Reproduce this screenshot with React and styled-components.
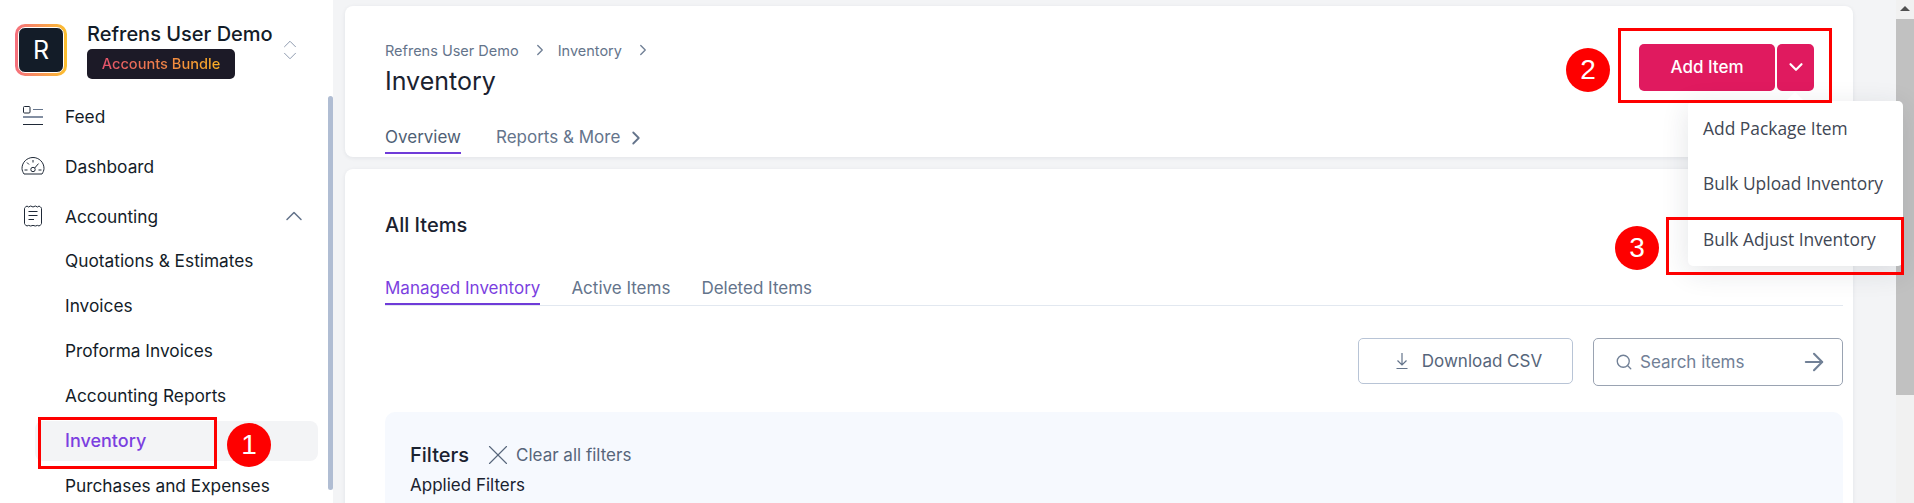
import styled, { createGlobalStyle } from 'styled-components';
import { ChevronUp, ChevronDown, ChevronRight, Search, ArrowRight, X } from 'lucide-react';

const font = `'Inter', 'Noto Sans', sans-serif`;

const GlobalStyle = createGlobalStyle`
  html, body {
    margin: 0;
    padding: 0;
    height: 503px;
    overflow: hidden;
    background: #f3f4f6;
    font-family: ${font};
  }
  * { box-sizing: border-box; }
`;

const Page = styled.div`
  position: relative;
  display: flex;
  width: 1914px;
  height: 503px;
  overflow: hidden;
  background: #f3f4f6;
`;

const Sidebar = styled.aside`
  position: relative;
  flex: 0 0 333px;
  height: 503px;
  background: #fff;
  overflow: hidden;
`;

const SideThumb = styled.div`
  position: absolute;
  right: 0;
  top: 96px;
  width: 5px;
  height: 394px;
  border-radius: 3px;
  background: #b0bdd3;
`;

const Brand = styled.div`
  display: flex;
  align-items: center;
  height: 91px;
  padding: 9px 0 0 15px;
`;

const LogoRing = styled.div`
  flex: 0 0 52px;
  height: 52px;
  padding: 3px;
  border-radius: 10px;
  background: linear-gradient(90deg, #f56f7e, #fcc02e);
`;

const Logo = styled.div`
  display: flex;
  align-items: center;
  justify-content: center;
  height: 100%;
  border: 1px solid #fff;
  border-radius: 7px;
  background: #131c28;
  color: #fff;
  font-size: 25px;
`;

const BrandText = styled.div`
  display: flex;
  flex-direction: column;
  align-items: flex-start;
  gap: 2px;
  width: 197px;
  margin-left: 20px;
`;

const BrandName = styled.div`
  font-size: 20px;
  line-height: 25px;
  font-weight: 500;
  color: #131c28;
  white-space: nowrap;
`;

const Badge = styled.div`
  display: flex;
  align-items: center;
  justify-content: center;
  width: 148px;
  height: 30px;
  border-radius: 5px;
  background: #1c1a27;
  font-size: 14.6px;
  font-weight: 500;
  span {
    background: linear-gradient(90deg, #e6526c, #fbb124);
    -webkit-background-clip: text;
    background-clip: text;
    color: transparent;
  }
`;

const Switcher = styled.div`
  display: flex;
  flex-direction: column;
  color: #8593a8;
  margin-left: -5px;
  svg { margin: -5px 0; }
`;

const NavRow = styled.div`
  display: flex;
  align-items: center;
  height: 50px;
  padding-left: 21px;
  color: #131c28;
  font-size: 17.3px;
`;

const NavIcon = styled.svg`
  flex: 0 0 24px;
  margin-right: 20px;
`;

const Caret = styled.div`
  display: flex;
  margin-left: auto;
  margin-right: 25px;
  color: #64748b;
`;

const SubList = styled.div`
  display: flex;
  flex-direction: column;
  margin-top: -3px;
`;

const SubRow = styled.div`
  display: flex;
  align-items: center;
  height: 40px;
  margin: 2.5px 15px 2.5px 35px;
  padding-left: 30px;
  border-radius: 8px;
  white-space: nowrap;
  font-size: ${(p) => (p.$active ? 18 : 17.3)}px;
  color: ${(p) => (p.$active ? '#7b3fe0' : '#131c28')};
  font-weight: ${(p) => (p.$active ? 500 : 400)};
  background: ${(p) => (p.$active ? '#f3f4f6' : 'transparent')};
`;

const Main = styled.main`
  flex: 1;
  display: flex;
  flex-direction: column;
  gap: 12px;
  padding: 6px 61px 0 12px;
  min-width: 0;
`;

const TopCard = styled.section`
  position: relative;
  flex: 0 0 151px;
  background: #fff;
  border-radius: 8px;
  box-shadow: 0 1px 4px rgba(30, 41, 59, 0.08);
  padding: 33px 0 0 40px;
`;

const Crumbs = styled.div`
  display: flex;
  align-items: center;
  height: 22px;
  font-size: 14.5px;
  color: #64748b;
  svg { margin: 0 9px 0 12px; color: #718096; }
`;

const Title = styled.h1`
  margin: 3px 0 0;
  font-size: 25px;
  line-height: 34px;
  font-weight: 400;
  color: #1a2230;
`;

const TopTabs = styled.div`
  display: flex;
  gap: 35px;
  margin-top: 24px;
`;

const Tab = styled.div`
  display: flex;
  align-items: center;
  height: 32px;
  padding-bottom: 1px;
  font-size: 17px;
  white-space: nowrap;
  color: ${(p) => (p.$purple ? '#7b3fe0' : p.$line ? '#4f5f75' : '#64748b')};
  border-bottom: 2px solid ${(p) => (p.$line ? '#6f3bd8' : 'transparent')};
  svg { margin-left: 5px; margin-top: 2px; }
`;

const ButtonGroup = styled.div`
  position: absolute;
  top: 38px;
  right: 39px;
  display: flex;
  gap: 2px;
`;

const PinkButton = styled.button`
  display: flex;
  align-items: center;
  justify-content: center;
  width: ${(p) => p.$w}px;
  height: 47px;
  padding: 0 0 1px;
  border: 0;
  border-radius: 5px;
  background: #e01a5f;
  color: #fff;
  font-family: ${font};
  font-size: 17px;
  font-weight: 500;
`;

const BodyCard = styled.section`
  flex: 1;
  background: #fff;
  border-radius: 8px 8px 0 0;
  box-shadow: 0 1px 4px rgba(30, 41, 59, 0.08);
  padding: 43px 10px 0 40px;
`;

const SectionTitle = styled.h2`
  margin: 0;
  font-size: 20px;
  line-height: 26px;
  font-weight: 500;
  color: #1a2230;
`;

const TabBar = styled.div`
  display: flex;
  gap: 31px;
  margin-top: 35px;
  border-bottom: 1px solid #e2e8f0;
`;

const Tools = styled.div`
  display: flex;
  justify-content: flex-end;
  align-items: flex-start;
  gap: 20px;
  margin-top: 32px;
`;

const DownloadButton = styled.button`
  display: flex;
  align-items: center;
  justify-content: center;
  gap: 12px;
  width: 215px;
  height: 46px;
  padding: 0 0 0 5px;
  background: #fff;
  border: 1px solid #b8c4d6;
  border-radius: 5px;
  color: #56657a;
  font-family: ${font};
  font-size: 17px;
`;

const SearchBox = styled.div`
  display: flex;
  align-items: center;
  width: 250px;
  height: 48px;
  padding: 0 14px 0 21px;
  border: 1px solid #9aa3b2;
  border-radius: 5px;
  color: #718096;
  font-size: 17px;
  span { margin-left: 7px; flex: 1; }
`;

const FilterPanel = styled.div`
  margin-top: 26px;
  height: 100px;
  padding: 30px 25px 0;
  border-radius: 10px 10px 0 0;
  background: #f6f9fe;
`;

const FilterHead = styled.div`
  display: flex;
  align-items: center;
  height: 26px;
`;

const FilterTitle = styled.div`
  font-size: 20px;
  font-weight: 500;
  color: #1a2230;
`;

const ClearLink = styled.div`
  display: flex;
  align-items: center;
  gap: 7px;
  margin-left: 18px;
  font-size: 17px;
  color: #56657a;
  svg { margin: -6px; }
`;

const AppliedLabel = styled.div`
  margin-top: 6px;
  font-size: 17px;
  line-height: 22px;
  color: #1a2230;
`;

const Scrollbar = styled.div`
  position: absolute;
  top: 0;
  right: 0;
  bottom: 0;
  width: 18px;
  background: #f1f1f1;
`;

const ScrollArrow = styled.div`
  position: absolute;
  top: 6px;
  left: 4px;
  width: 0;
  height: 0;
  border-left: 5px solid transparent;
  border-right: 5px solid transparent;
  border-bottom: 5px solid #505050;
`;

const ScrollThumb = styled.div`
  position: absolute;
  top: 19px;
  left: 0;
  right: 0;
  height: 376px;
  background: #c1c1c1;
`;

const Menu = styled.div`
  position: absolute;
  top: 101px;
  left: 1688px;
  width: 215px;
  height: 165px;
  border-radius: 5px;
  background: #fff;
  box-shadow: 0 6px 28px rgba(30, 41, 59, 0.12);
  font-family: 'Open Sans', 'Noto Sans', sans-serif;
  &::before {
    content: '';
    position: absolute;
    top: -9px;
    left: 98px;
    border-left: 9px solid transparent;
    border-right: 9px solid transparent;
    border-bottom: 9px solid #fff;
  }
`;

const MenuItem = styled.div`
  display: flex;
  align-items: center;
  height: 55.5px;
  padding-left: 15px;
  font-size: 17.4px;
  color: #3f4754;
  white-space: nowrap;
  &:first-child { margin-top: -1px; }
`;

const RedBox = styled.div`
  position: absolute;
  left: ${(p) => p.$x}px;
  top: ${(p) => p.$y}px;
  width: ${(p) => p.$w}px;
  height: ${(p) => p.$h}px;
  border: 3px solid #fe0000;
`;

const Marker = styled.div`
  position: absolute;
  left: ${(p) => p.$x}px;
  top: ${(p) => p.$y}px;
  display: flex;
  align-items: center;
  justify-content: center;
  width: 44px;
  height: 44px;
  border-radius: 50%;
  background: #fe0000;
  color: #fff;
  font-family: 'Liberation Sans', Arial, sans-serif;
  font-size: 28px;
`;

const FeedIcon = () => (
  <NavIcon width="24" height="24" viewBox="0 0 24 24" fill="none" stroke="#1f2937" strokeWidth="1">
    <rect x="2.5" y="2.5" width="6.5" height="6.5" rx="1" />
    <path d="M12 5.5h10" stroke="#64748b" />
    <path d="M2 13h20" stroke="#64748b" strokeWidth="1.6" />
    <path d="M2 20.5h20" />
  </NavIcon>
);

const GaugeIcon = () => (
  <NavIcon width="24" height="24" viewBox="0 0 24 24" fill="none" stroke="#1f2937" strokeWidth="1">
    <path d="M3 20h18c1-1.6 2-3.6 2-5.6C23 8.3 18 3.5 12 3.5S1 8.3 1 14.4c0 2 1 4 2 5.6z" />
    <circle cx="12" cy="15.5" r="2.2" />
    <path d="M13.7 14l3.8-4.4M12 6v2.5M6 8.5l2 2M3.5 16h3M17.5 16h3" />
  </NavIcon>
);

const LedgerIcon = () => (
  <NavIcon width="24" height="24" viewBox="0 0 24 24" fill="none" stroke="#1f2937" strokeWidth="1">
    <path d="M4.5 3l1.5-1 1.5 1 2.2-1 2.3 1 2.3-1 2.2 1 1.5-1 1.5 1c.6.4 1 1 1 1.6v14.8c0 .7-.4 1.3-1 1.6l-1.5 1-1.5-.6-2.2.6-2.3-.6-2.3.6-2.2-.6-1.5.6-1.5-1c-.6-.3-1-.9-1-1.6V4.6c0-.6.4-1.2 1-1.6z" />
    <path d="M7.5 7.5h9M7.5 11.5h9M7.5 15.5h5.5" />
  </NavIcon>
);

const DownloadIcon = () => (
  <svg width="16" height="18" viewBox="0 0 16 18" fill="none" stroke="#64748b" strokeWidth="1.2">
    <path d="M8 1v11.5M3.5 8.5L8 13l4.5-4.5M2.5 16.5h11" />
  </svg>
);

const App = () => {
  const subItems = ['Quotations & Estimates', 'Invoices', 'Proforma Invoices', 'Accounting Reports'];
  return (
    <Page>
      <GlobalStyle />
      <Sidebar>
        <Brand>
          <LogoRing>
            <Logo>R</Logo>
          </LogoRing>
          <BrandText>
            <BrandName>Refrens User Demo</BrandName>
            <Badge>
              <span>Accounts Bundle</span>
            </Badge>
          </BrandText>
          <Switcher>
            <ChevronUp size={22} strokeWidth={1} />
            <ChevronDown size={22} strokeWidth={1} />
          </Switcher>
        </Brand>
        <NavRow>
          <FeedIcon />
          Feed
        </NavRow>
        <NavRow>
          <GaugeIcon />
          Dashboard
        </NavRow>
        <NavRow>
          <LedgerIcon />
          Accounting
          <Caret>
            <ChevronUp size={28} strokeWidth={1.3} />
          </Caret>
        </NavRow>
        <SubList>
          {subItems.map((item) => (
            <SubRow key={item}>{item}</SubRow>
          ))}
          <SubRow $active>Inventory</SubRow>
          <SubRow>Purchases and Expenses</SubRow>
        </SubList>
        <SideThumb />
      </Sidebar>

      <Main>
        <TopCard>
          <Crumbs>
            Refrens User Demo
            <ChevronRight size={18} strokeWidth={1.8} />
            Inventory
            <ChevronRight size={18} strokeWidth={1.8} />
          </Crumbs>
          <Title>Inventory</Title>
          <TopTabs>
            <Tab $line>Overview</Tab>
            <Tab>
              Reports &amp; More
              <ChevronRight size={22} strokeWidth={2} />
            </Tab>
          </TopTabs>
          <ButtonGroup>
            <PinkButton $w={136}>Add Item</PinkButton>
            <PinkButton $w={37}>
              <ChevronDown size={22} strokeWidth={2.4} />
            </PinkButton>
          </ButtonGroup>
        </TopCard>

        <BodyCard>
          <SectionTitle>All Items</SectionTitle>
          <TabBar>
            <Tab $purple $line>Managed Inventory</Tab>
            <Tab>Active Items</Tab>
            <Tab>Deleted Items</Tab>
          </TabBar>
          <Tools>
            <DownloadButton>
              <DownloadIcon />
              Download CSV
            </DownloadButton>
            <SearchBox>
              <Search size={18} strokeWidth={1.8} />
              <span>Search items</span>
              <ArrowRight size={28} strokeWidth={1.8} />
            </SearchBox>
          </Tools>
          <FilterPanel>
            <FilterHead>
              <FilterTitle>Filters</FilterTitle>
              <ClearLink>
                <X size={34} strokeWidth={0.8} />
                Clear all filters
              </ClearLink>
            </FilterHead>
            <AppliedLabel>Applied Filters</AppliedLabel>
          </FilterPanel>
        </BodyCard>
      </Main>

      <Scrollbar>
        <ScrollArrow />
        <ScrollThumb />
      </Scrollbar>

      <Menu>
        <MenuItem>Add Package Item</MenuItem>
        <MenuItem>Bulk Upload Inventory</MenuItem>
        <MenuItem>Bulk Adjust Inventory</MenuItem>
      </Menu>

      <RedBox $x={38} $y={417} $w={179} $h={52} />
      <RedBox $x={1618} $y={28} $w={214} $h={75} />
      <RedBox $x={1666} $y={217} $w={238} $h={58} />
      <Marker $x={227} $y={423}>1</Marker>
      <Marker $x={1566} $y={48}>2</Marker>
      <Marker $x={1615} $y={226}>3</Marker>
    </Page>
  );
};

export default App;
